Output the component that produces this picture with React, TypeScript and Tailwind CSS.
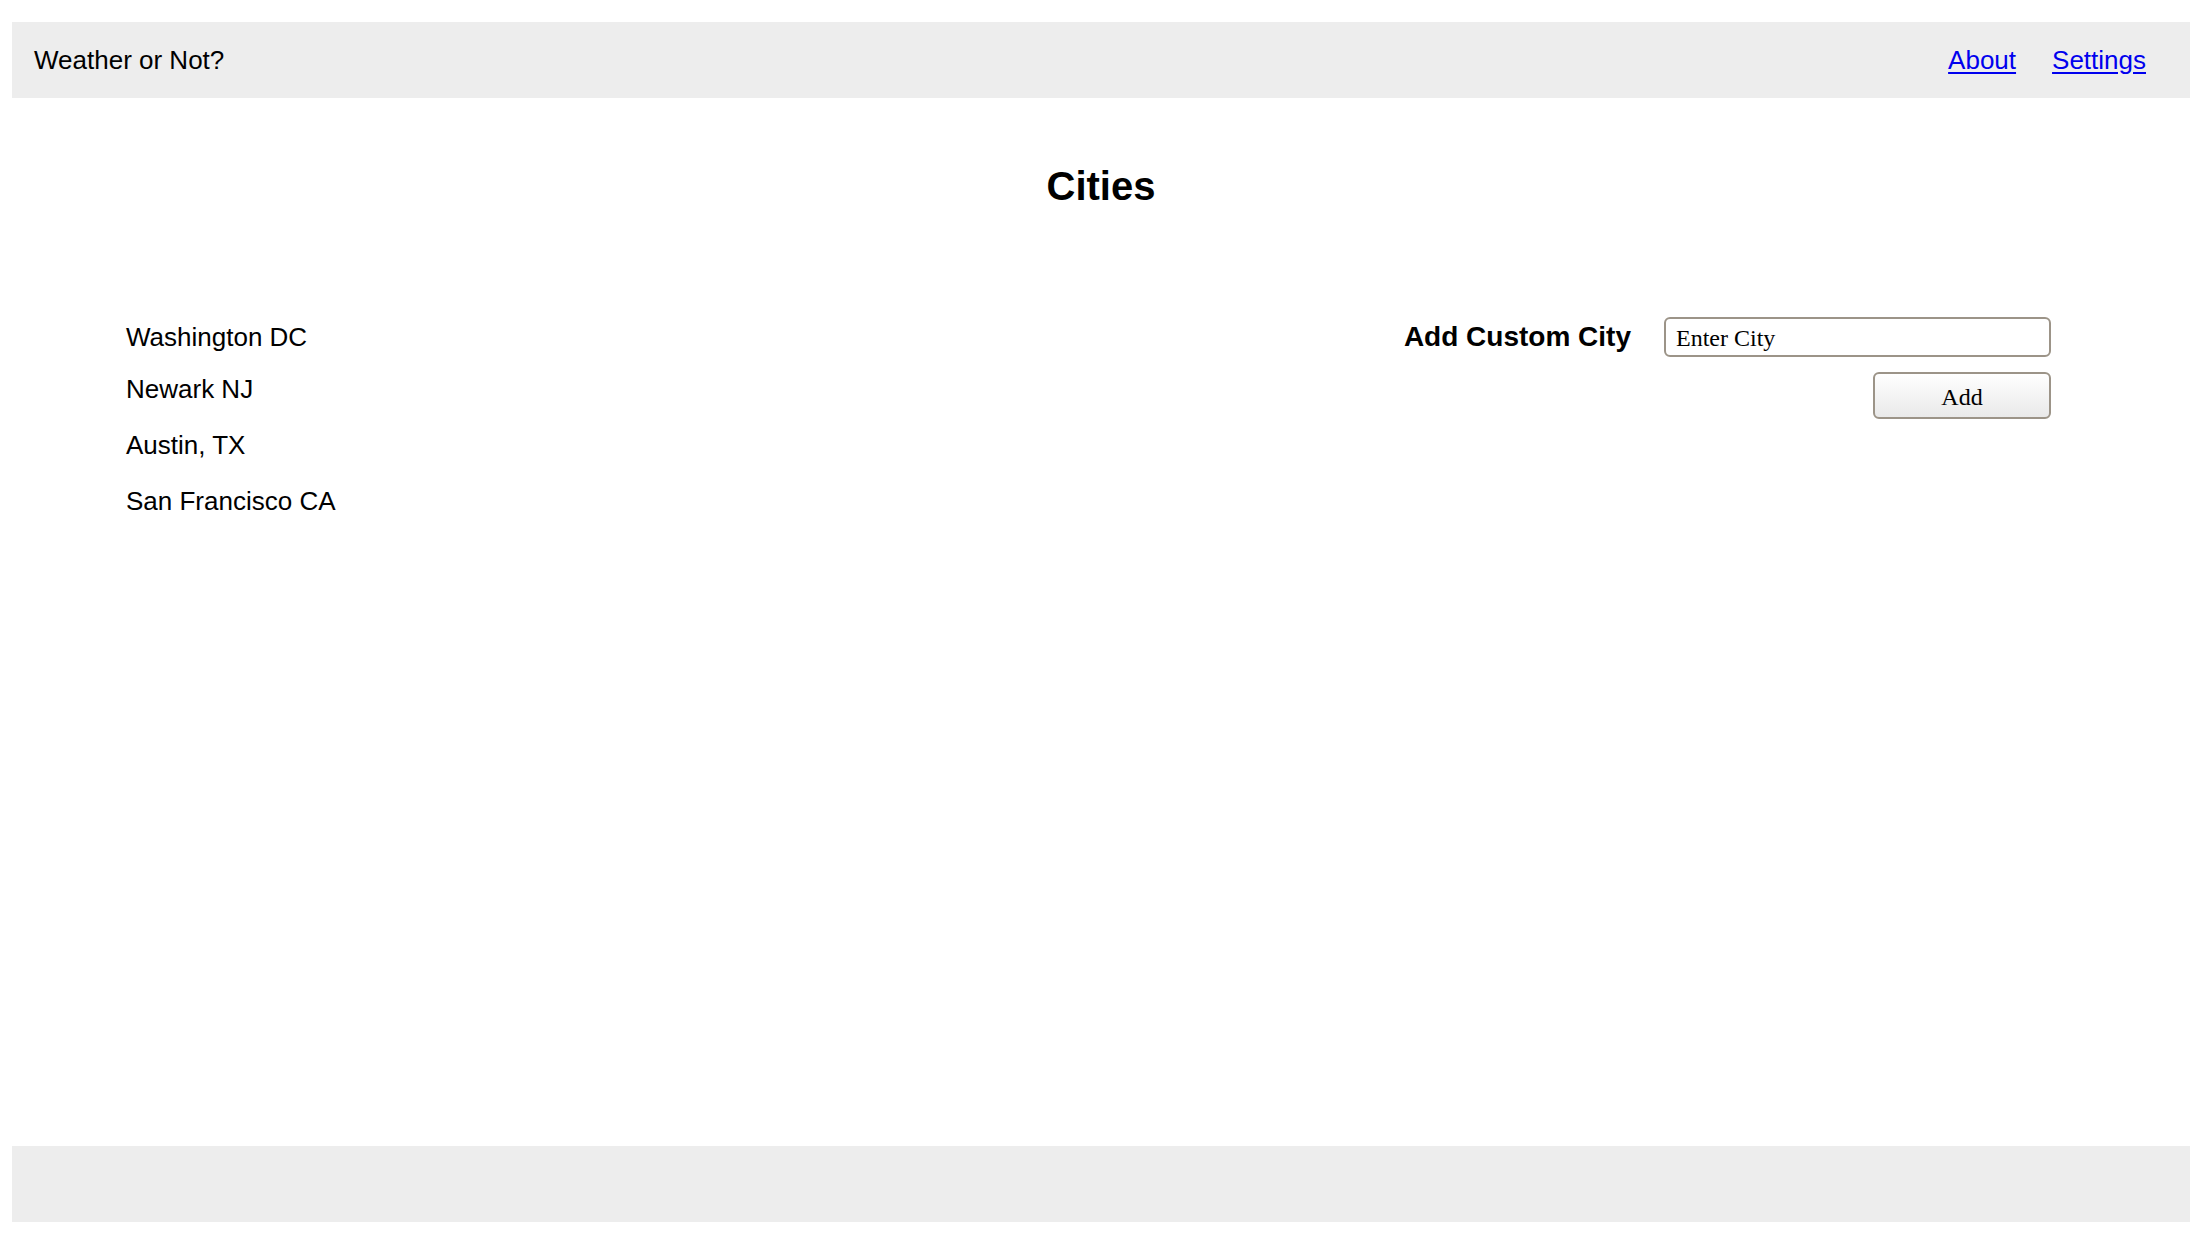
import React, { useState } from 'react';

const App: React.FC = () => {
  const [cities, setCities] = useState<string[]>(['Washington DC', 'Newark NJ', 'Austin, TX', 'San Francisco CA']);
  const [city, setCity] = useState('');

  const handleAdd = () => {
    if (!city.trim()) return;
    setCities([...cities, city.trim()]);
    setCity('');
  };

  return (
    <div className="h-screen flex flex-col bg-white pl-[12px] pr-[14px] pt-[22px] pb-[30px] text-black font-['Liberation_Sans',Arial,sans-serif]">
      {/* Header */}
      <header className="h-[76px] shrink-0 bg-[#ededed] flex items-center justify-between pl-[22px] pr-[44px] text-[26px]">
        <span>Weather or Not?</span>
        <nav className="flex items-center gap-[36px]">
          <a href="#" className="text-[#0000ee] underline underline-offset-[3px]">About</a>
          <a href="#" className="text-[#0000ee] underline underline-offset-[3px]">Settings</a>
        </nav>
      </header>

      {/* Content */}
      <main className="flex-1 flex flex-col">
        <h1 className="mt-[66px] text-center text-[40px] leading-[44px] font-bold">Cities</h1>

        <div className="flex justify-between items-start pl-[114px] pr-[139px]">
          <ul className="mt-[114px] text-[26px] leading-[30px]">
            {cities.map((c, i) => (
              <li key={c + i} className={i === 0 ? '' : i === 1 ? 'mt-[22px]' : 'mt-[26px]'}>
                {c}
              </li>
            ))}
          </ul>

          <div className="mt-[109px] flex flex-col items-end">
            <div className="flex items-center gap-[33px]">
              <label className="text-[28px] leading-[32px] font-bold">Add Custom City</label>
              <input
                value={city}
                onChange={(e) => setCity(e.target.value)}
                placeholder="Enter City"
                className="w-[387px] h-[40px] border-2 border-[#9c9488] rounded-[6px] px-[10px] pt-[3px] text-[24px] font-['Liberation_Serif','Times_New_Roman',serif] placeholder:text-black outline-none"
              />
            </div>
            <button
              onClick={handleAdd}
              className="mt-[15px] w-[178px] h-[47px] pt-[3px] border-2 border-[#9c9488] rounded-[6px] bg-gradient-to-b from-white to-[#e9e9e9] text-[24px] font-['Liberation_Serif','Times_New_Roman',serif]"
            >
              Add
            </button>
          </div>
        </div>
      </main>

      {/* Footer */}
      <footer className="h-[76px] shrink-0 bg-[#ededed]"></footer>
    </div>
  );
};

export default App;
